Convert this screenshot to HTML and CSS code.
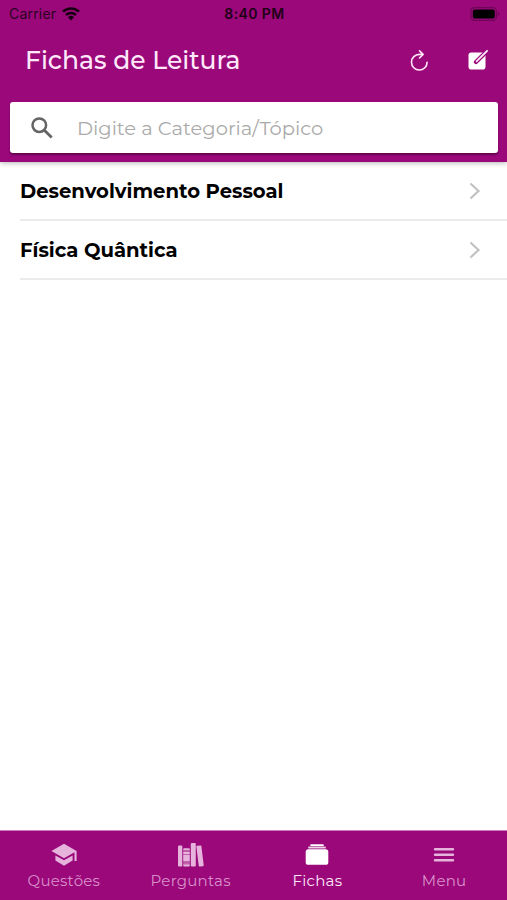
FILE: index.html
```html
<!DOCTYPE html>
<html lang="pt">
<head>
  <meta charset="UTF-8" />
  <meta name="viewport" content="width=device-width, initial-scale=1.0" />
  <title>Fichas de Leitura</title>
  <link rel="stylesheet" href="styles.css">
</head>
<body>
  <header class="header">
    <div class="status-bar">
      <div class="carrier">
        <span>Carrier</span>
        <svg width="18" height="14" viewBox="0 0 18 14" fill="none" stroke="#16000f" stroke-width="2.5">
          <path d="M1 4.7a11.500 11.500 0 0 1 16 0M4 8a7.300 7.300 0 0 1 10 0" />
          <path d="M6 10.200a4.400 4.400 0 0 1 6 0L9 13.500z" fill="#16000f" stroke="none" />
        </svg>
      </div>
      <span class="time">8:40 PM</span>
      <svg class="battery" width="30" height="14" viewBox="0 0 30 14">
        <rect x="1" y=".7" width="25.5" height="12.6" rx="3.6" fill="none" stroke="#6f0557" stroke-width="1.2" />
        <rect x="2.8" y="2.6" width="22" height="8.8" rx="2" fill="#000" />
        <path d="M28 5v4q1.5-.7 1.5-2T28 5z" fill="#6f0557" />
      </svg>
    </div>
    <div class="top-bar">
      <h1>Fichas de Leitura</h1>
      <div class="top-bar-buttons">
        <svg width="20" height="22" viewBox="0 0 20 22" fill="none" stroke="#ffe8fa" stroke-width="1.6" stroke-linecap="round" stroke-linejoin="round">
          <path d="M13.6 5.4H10.300a7.800 7.800 0 1 0 7.800 7.800" />
          <path d="M10.500 1.800l3.600 3.600-3.600 3.600" />
        </svg>
        <svg width="21" height="21" viewBox="0 0 21 21">
          <rect x=".5" y="3.5" width="17" height="17" rx="2.8" fill="#fff" />
          <path d="M18.8 2.2L10 11 8 13" stroke="#9a087a" stroke-width="4.2" stroke-linecap="round" />
          <path d="M19.1 1.8l-8.8 8.9-1.7 1.6" fill="none" stroke="#ffe8fa" stroke-width="1.8" stroke-linecap="round" />
        </svg>
      </div>
    </div>
    <div class="search-box">
      <svg width="22" height="22" viewBox="0 0 22 22" fill="none" stroke="#646464" stroke-width="2.5">
        <circle cx="8.3" cy="8.2" r="6.8" />
        <path d="M13.1 13l7.6 7.600" stroke-width="2.8" />
      </svg>
      <input type="text" placeholder="Digite a Categoria/Tópico" />
    </div>
  </header>

  <main class="list">
    <a class="item">
      <span>Desenvolvimento Pessoal</span>
      <svg width="12" height="18" viewBox="0 0 12 18" fill="none" stroke="#c2c2c4" stroke-width="2.2"><path d="M1.5 1.5L9.5 9l-8 7.5" /></svg>
    </a>
    <a class="item">
      <span>Física Quântica</span>
      <svg width="12" height="18" viewBox="0 0 12 18" fill="none" stroke="#c2c2c4" stroke-width="2.2"><path d="M1.5 1.5L9.5 9l-8 7.5" /></svg>
    </a>
  </main>

  <nav class="tabs">
    <a class="tab">
      <svg width="26" height="24" viewBox="0 0 26 24" fill="currentColor">
        <path d="M13 .8L.4 8 13 15.300l10.500-6v8.800h2.100V8z" />
        <path d="M4.4 12.4v5.1L13 22.8l8.6-5.3v-5.1L13 17.3z" />
      </svg>
      <span>Questões</span>
    </a>
    <a class="tab">
      <svg width="26" height="24" viewBox="0 0 26 24" fill="currentColor">
        <rect x="0" y="2.5" width="4.300" height="21" rx="1" />
        <path d="M6.2 5.3h4.6q1 0 1 1v1.2H5.2V6.300q0-1 1-1zM5.200 8.400h6.600v2.600H5.200zM5.200 11.600h6.600v7H5.200zM5.200 19.400h6.600v1.200H5.200zM5.200 21.300h6.600v1.200q0 1-1 1H6.200q-1 0-1-1z" />
        <rect x="12.800" y="0" width="5" height="23.500" rx="1" />
        <path d="M19.200 2.800l3.200-.3q.9-.1 1 .8l2.300 19q.1.900-.8 1l-3.200.300q-.9.100-1-.800l-2.300-19q-.100-.900.800-1z" />
      </svg>
      <span>Perguntas</span>
    </a>
    <a class="tab active">
      <svg width="24" height="24" viewBox="0 0 24 24" fill="currentColor">
        <rect x="5.200" y="1.300" width="13.600" height="1.700" rx=".7" />
        <rect x="3.200" y="3.600" width="17.600" height="2" rx=".7" opacity=".8" />
        <rect x=".7" y="6.300" width="22.600" height="15.500" rx="2.600" />
      </svg>
      <span>Fichas</span>
    </a>
    <a class="tab">
      <svg width="24" height="24" viewBox="0 0 24 24" stroke="currentColor" stroke-width="2.400" stroke-linecap="round">
        <path d="M3 6.200h18M3 11.700h18M3 17.300h18" />
      </svg>
      <span>Menu</span>
    </a>
  </nav>
</body>
</html>
```
FILE: styles.css
```css
* {
  margin: 0;
  padding: 0;
  box-sizing: border-box;
}

body {
  display: flex;
  flex-direction: column;
  height: 100vh;
  overflow: hidden;
  background: #fff;
  font-family: Montserrat, Inter, sans-serif;
}
svg {
  display: block;
  flex-shrink: 0;
}

.header {
  height: 162px;
  background: #9a087a;
  box-shadow: 0 1px 5px rgba(0, 0, 0, 0.3);
}
.status-bar {
  display: grid;
  grid-template-columns: 1fr auto 1fr;
  align-items: center;
  height: 27px;
  padding: 0 7px 0 9px;
  font-family: Inter, sans-serif;
  font-size: 14px;
  color: #2b0421;
}
.carrier {
  display: flex;
  align-items: center;
  gap: 6px;
  letter-spacing: 0.2px;
}
.time {
  font-weight: 600;
  letter-spacing: 0.4px;
  color: #1d0016;
}
.battery {
  justify-self: end;
}

.top-bar {
  display: flex;
  justify-content: space-between;
  align-items: center;
  height: 65px;
  padding: 0 18px 0 25px;
}
.top-bar h1 {
  font-size: 25px;
  font-weight: 500;
  color: #ffe8fa;
}
.top-bar-buttons {
  display: flex;
  align-items: center;
  gap: 39px;
}

.search-box {
  display: flex;
  align-items: center;
  gap: 24px;
  height: 51px;
  margin: 10px 9px 0 10px;
  padding: 0 21px;
  background: #fff;
  border-radius: 3px;
  box-shadow: 0 2px 2px rgba(0, 0, 0, 0.35);
}
.search-box input {
  flex: 1;
  border: none;
  outline: none;
  font-family: inherit;
  font-size: 19.5px;
  font-weight: 400;
}
.search-box input::placeholder {
  color: #aaa;
}

.list {
  flex: 1;
}
.item {
  display: flex;
  justify-content: space-between;
  align-items: center;
  height: 59px;
  margin-left: 20px;
  padding: 1px 26px 0 0;
  border-bottom: 2px solid #ebebeb;
  font-size: 19.6px;
  font-weight: 700;
  color: #000;
}

.tabs {
  display: grid;
  grid-template-columns: repeat(4, 1fr);
  height: 70px;
  background: #9a087a;
  border-top: 1px solid #cf78bb;
}
.tab {
  display: flex;
  flex-direction: column;
  align-items: center;
  gap: 4px;
  padding: 12px 0 0 1px;
  font-size: 15px;
  line-height: 19px;
  letter-spacing: 0.25px;
  color: #e5b3db;
}
.tab span {
  color: #d990ca;
}
.tab.active {
  color: #fff;
}
.tab.active span {
  color: #ffe8fa;
}
```
